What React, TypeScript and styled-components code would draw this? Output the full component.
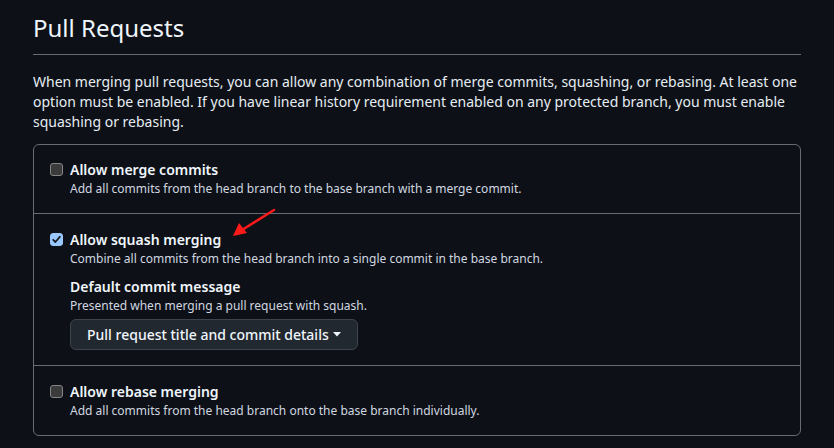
import React from "react";
import styled, { createGlobalStyle } from "styled-components";

const Global = createGlobalStyle`
  html, body { margin: 0; padding: 0; background: #0d1117; }
  body { font-family: "Noto Sans", "Liberation Sans", sans-serif; color: #e6edf3; }
  * { box-sizing: border-box; }
`;

const Page = styled.div`
  width: 834px;
  height: 448px;
  padding: 10px 33px 0 33px;
  background: #0d1117;
  overflow: hidden;
`;

const Heading = styled.h2`
  margin: 0;
  font-size: 24px;
  font-weight: 400;
  line-height: 36px;
  color: #f0f6fc;
  padding-bottom: 8px;
  border-bottom: 1px solid #656c76;
`;

const Intro = styled.p`
  margin: 17px 0 12px;
  font-size: 14px;
  line-height: 20px;
  color: #e6edf3;
`;

const Box = styled.div`
  position: relative;
  border: 1px solid #656c76;
  border-radius: 6px;
`;

const Row = styled.div`
  display: flex;
  gap: 7px;
  padding: 15px 16px;
  &:first-child { padding-top: 14px; }
  & + & { border-top: 1px solid #656c76; }
`;

const Check = styled.span<{ $checked?: boolean }>`
  flex: none;
  width: 13px;
  height: 13px;
  margin-top: 4px;
  border-radius: 3px;
  display: flex;
  align-items: center;
  justify-content: center;
  background: ${(p) => (p.$checked ? "#99c8ff" : "#3b3b3b")};
  border: 1px solid ${(p) => (p.$checked ? "#99c8ff" : "#858585")};
`;

const Body = styled.div`
  display: flex;
  flex-direction: column;
`;

const Title = styled.div`
  font-size: 14px;
  font-weight: 600;
  line-height: 21px;
  color: #f0f6fc;
`;

const Note = styled.div`
  font-size: 12px;
  line-height: 18px;
  color: #d1d7e0;
`;

const SubTitle = styled(Title)`
  margin-top: 8px;
`;

const Select = styled.button`
  margin-top: 4px;
  align-self: flex-start;
  height: 31px;
  padding: 0 16px;
  display: flex;
  align-items: center;
  gap: 4px;
  background: #212830;
  border: 1px solid #3d444d;
  border-radius: 6px;
  color: #f0f6fc;
  font-family: "Noto Sans", "Liberation Sans", sans-serif;
  font-size: 14px;
  font-weight: 500;
`;

const Arrow = styled.svg`
  position: absolute;
  left: 190px;
  top: 58px;
  pointer-events: none;
`;

const Tick = () => (
  <svg width="9" height="9" viewBox="0 0 9 9">
    <path d="M1.2 4.8 L3.4 7 L7.8 1.8" stroke="#1b1f24" strokeWidth="1.8" fill="none" strokeLinecap="round" strokeLinejoin="round" />
  </svg>
);

export default function App() {
  return (
    <Page>
      <Global />
      <Heading>Pull Requests</Heading>
      <Intro>
        When merging pull requests, you can allow any combination of merge commits, squashing, or rebasing. At least one
        option must be enabled. If you have linear history requirement enabled on any protected branch, you must enable
        squashing or rebasing.
      </Intro>
      <Box>
        <Row>
          <Check />
          <Body>
            <Title>Allow merge commits</Title>
            <Note>Add all commits from the head branch to the base branch with a merge commit.</Note>
          </Body>
        </Row>
        <Row>
          <Check $checked>
            <Tick />
          </Check>
          <Body>
            <Title>Allow squash merging</Title>
            <Note>Combine all commits from the head branch into a single commit in the base branch.</Note>
            <SubTitle>Default commit message</SubTitle>
            <Note>Presented when merging a pull request with squash.</Note>
            <Select>
              Pull request title and commit details
              <svg width="8" height="5" viewBox="0 0 8 5">
                <path d="M0 0 L8 0 L4 4.5 Z" fill="#f0f6fc" />
              </svg>
            </Select>
          </Body>
        </Row>
        <Row>
          <Check />
          <Body>
            <Title>Allow rebase merging</Title>
            <Note>Add all commits from the head branch onto the base branch individually.</Note>
          </Body>
        </Row>
        <Arrow width="60" height="40" viewBox="0 0 60 40">
          <path d="M50 7 L18 27" stroke="#ff1a1a" strokeWidth="2.5" strokeLinecap="round" />
          <path d="M9 33 L15 20 L23 30 Z" fill="#ff1a1a" />
        </Arrow>
      </Box>
    </Page>
  );
}
